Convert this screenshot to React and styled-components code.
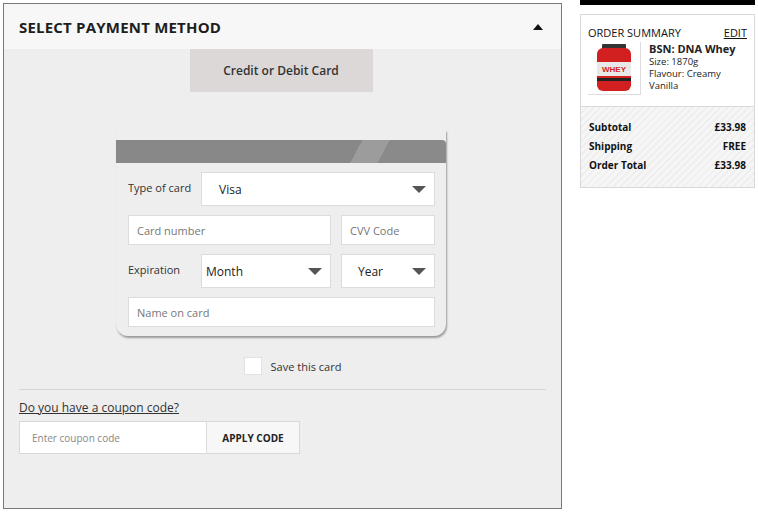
import styled, { createGlobalStyle } from 'styled-components'

const Global = createGlobalStyle`
  body { margin: 0; background: #fff; font-family: "Open Sans", "Liberation Sans", sans-serif; color: #222; }
`

const Page = styled.div`
  display: flex;
  align-items: flex-start;
  gap: 18px;
  padding: 0 0 0 3px;
  width: 758px;
  height: 518px;
  box-sizing: border-box;
`

const Panel = styled.div`
  width: 559px;
  height: 506px;
  margin-top: 3px;
  border: 1px solid #7a7a7a;
  box-sizing: border-box;
  background: #eeeeee;
  display: flex;
  flex-direction: column;
`

const PanelHead = styled.div`
  height: 45px;
  background: #f7f7f7;
  display: flex;
  align-items: center;
  justify-content: space-between;
  padding: 0 15px 0 15px;
  font-weight: 700;
  font-size: 15px;
  letter-spacing: 0.2px;
  color: #1e1e1e;
`

const Caret = styled.span`
  width: 0; height: 0;
  border-left: 5px solid transparent;
  border-right: 5px solid transparent;
  border-bottom: 6px solid #111;
  margin-right: 3px;
`

const Body = styled.div`
  display: flex;
  flex-direction: column;
  align-items: center;
  padding: 0 15px;
`

const MethodTab = styled.div`
  width: 183px;
  height: 43px;
  background: #dcd8d8;
  display: flex;
  align-items: center;
  justify-content: center;
  font-size: 12px;
  font-weight: 600;
  color: #333;
  margin-right: 3px;
`

const Card = styled.div`
  margin-top: 38px;
  width: 330px;
  margin-right: 3px;
  padding-top: 10px;
  border-radius: 0 0 12px 12px;
  box-shadow: 1px 2px 2px rgba(0,0,0,0.35);
  background: #eeeeee;
  padding-bottom: 9px;
`

const CardBar = styled.div`
  height: 23px;
  background: linear-gradient(118deg, #888 0 72%, #9c9c9c 72% 80%, #8a8a8a 80%);
  border-radius: 0 4px 0 0;
`

const Fields = styled.div`
  display: flex;
  flex-direction: column;
  gap: 9px;
  padding: 9px 11px 0 12px;
`

const Row = styled.div`
  display: flex;
  align-items: center;
  gap: 10px;
`

const Label = styled.span`
  font-size: 11px;
  color: #333;
  width: ${p => p.w}px;
  white-space: nowrap;
  flex-shrink: 0;
  margin-top: -4px;
`

const Box = styled.div`
  height: ${p => p.h || 30}px;
  width: ${p => (p.w ? `${p.w}px` : 'auto')};
  flex: ${p => (p.w ? 'none' : 1)};
  box-sizing: border-box;
  background: #fff;
  border: 1px solid #dcdcdc;
  display: flex;
  align-items: center;
  justify-content: space-between;
  padding: 0 8px 0 ${p => p.pl || 8}px;
  font-size: ${p => (p.select ? 12 : 11)}px;
  color: ${p => (p.select ? '#222' : '#777')};
`

const Arrow = styled.span`
  width: 0; height: 0;
  border-left: 7px solid transparent;
  border-right: 7px solid transparent;
  border-top: 7px solid #555;
`

const SaveRow = styled.label`
  display: flex;
  align-items: center;
  gap: 9px;
  margin-top: 21px;
  font-size: 11px;
  color: #333;
  margin-left: 20px;
`

const Check = styled.span`
  width: 16px; height: 16px;
  background: #fff;
  border: 1px solid #e2e2e2;
`

const Divider = styled.hr`
  align-self: stretch;
  border: none;
  border-top: 1px solid #d6d6d6;
  margin: 14px 0 0;
`

const Coupon = styled.div`
  align-self: stretch;
  display: flex;
  flex-direction: column;
  gap: 5px;
  margin-top: 9px;
`

const CouponLink = styled.a`
  font-size: 12px;
  color: #333;
  text-decoration: underline;
`

const CouponForm = styled.div`
  display: flex;
  width: 281px;
  height: 33px;
  border: 1px solid #d8d8d8;
  box-sizing: border-box;
`

const CouponInput = styled.div`
  width: 174px;
  background: #fff;
  border-right: 1px solid #ddd;
  display: flex;
  align-items: center;
  padding-left: 12px;
  font-size: 10px;
  color: #888;
`

const ApplyBtn = styled.div`
  flex: 1;
  background: #f7f7f7;
  display: flex;
  align-items: center;
  justify-content: center;
  font-size: 10px;
  font-weight: 700;
  color: #222;
`

const Side = styled.div`
  width: 175px;
  display: flex;
  flex-direction: column;
  gap: 9px;
`

const TopBar = styled.div`
  height: 5px;
  background: #000;
`

const Summary = styled.div`
  border: 1px solid #d8d8d8;
  background: #fff;
`

const SumHead = styled.div`
  display: flex;
  justify-content: space-between;
  padding: 10px 7px 0 7px;
  font-size: 11px;
  color: #111;
`

const Edit = styled.span`
  text-decoration: underline;
`

const Product = styled.div`
  display: flex;
  gap: 8px;
  padding: 2px 6px 11px 7px;
  border-bottom: 1px solid #d8d8d8;
`

const Thumb = styled.div`
  width: 52px;
  height: 52px;
  border-right: 1px solid #ddd;
  border-bottom: 1px solid #ddd;
  display: flex;
  align-items: center;
  justify-content: center;
  flex-shrink: 0;
`

const ProdText = styled.div`
  font-size: 9.5px;
  line-height: 12px;
  color: #222;
  & b { font-size: 11px; line-height: 14px; display: block; }
`

const Totals = styled.div`
  background: repeating-linear-gradient(135deg, #f6f6f6 0 3px, #efefef 3px 5px);
  padding: 13px 8px 15px;
  display: flex;
  flex-direction: column;
  gap: 5px;
`

const TotalRow = styled.div`
  display: flex;
  justify-content: space-between;
  font-size: 10px;
  font-weight: 700;
  color: #111;
`

const Tub = () => (
  <svg width="42" height="48" viewBox="0 0 42 48">
    <rect x="9" y="0" width="24" height="5" rx="1" fill="#333" />
    <rect x="4" y="4" width="34" height="43" rx="6" fill="#d21f1f" />
    <rect x="4" y="18" width="34" height="14" fill="#e8e8e8" />
    <text x="21" y="28" fontSize="8" fontWeight="700" fill="#d21f1f" textAnchor="middle" fontFamily="Liberation Sans">WHEY</text>
    <rect x="4" y="34" width="34" height="3" fill="#222" />
  </svg>
)

export default function App() {
  return (
    <Page>
      <Global />
      <Panel>
        <PanelHead>
          SELECT PAYMENT METHOD
          <Caret />
        </PanelHead>
        <Body>
          <MethodTab>Credit or Debit Card</MethodTab>
          <Card>
            <CardBar />
            <Fields>
              <Row>
                <Label w={63}>Type of card</Label>
                <Box select pl={17} h={34}>Visa<Arrow /></Box>
              </Row>
              <Row>
                <Box>Card number</Box>
                <Box w={94}>CVV Code</Box>
              </Row>
              <Row>
                <Label w={63}>Expiration</Label>
                <Box select pl={4} h={34}>Month<Arrow /></Box>
                <Box select pl={16} h={34} w={94}>Year<Arrow /></Box>
              </Row>
              <Row>
                <Box>Name on card</Box>
              </Row>
            </Fields>
          </Card>
          <SaveRow><Check />Save this card</SaveRow>
          <Divider />
          <Coupon>
            <CouponLink>Do you have a coupon code?</CouponLink>
            <CouponForm>
              <CouponInput>Enter coupon code</CouponInput>
              <ApplyBtn>APPLY CODE</ApplyBtn>
            </CouponForm>
          </Coupon>
        </Body>
      </Panel>
      <Side>
        <TopBar />
        <Summary>
          <SumHead>ORDER SUMMARY<Edit>EDIT</Edit></SumHead>
          <Product>
            <Thumb><Tub /></Thumb>
            <ProdText>
              <b>BSN: DNA Whey</b>
              Size: 1870g<br />Flavour: Creamy<br />Vanilla
            </ProdText>
          </Product>
          <Totals>
            <TotalRow><span>Subtotal</span><span>£33.98</span></TotalRow>
            <TotalRow><span>Shipping</span><span>FREE</span></TotalRow>
            <TotalRow><span>Order Total</span><span>£33.98</span></TotalRow>
          </Totals>
        </Summary>
      </Side>
    </Page>
  )
}
